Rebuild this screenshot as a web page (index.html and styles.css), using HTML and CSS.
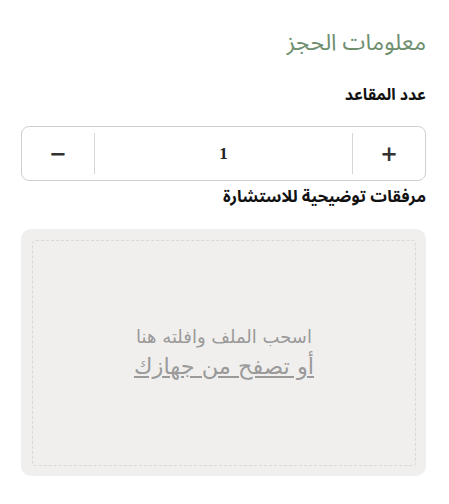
FILE: index.html
```html
<!DOCTYPE html>
<html lang="ar" dir="rtl">
<head>
    <meta charset="UTF-8">
    <meta name="viewport" content="width=device-width, initial-scale=1.0">
    <title>معلومات الحجز</title>
    <link rel="stylesheet" href="styles.css">
</head>
<body>
    <div class="booking">
        <h2 class="booking-title">معلومات الحجز</h2>

        <label class="field-label">عدد المقاعد</label>
        <div class="stepper">
            <button class="step-btn">+</button>
            <div class="step-value">1</div>
            <button class="step-btn">&minus;</button>
        </div>

        <label class="field-label attach-label">مرفقات توضيحية للاستشارة</label>
        <div class="dropzone">
            <div class="dropzone-inner">
                <div class="drop-text">اسحب الملف وافلته هنا</div>
                <a href="#" class="browse-link">أو تصفح من جهازك</a>
            </div>
        </div>
    </div>
</body>
</html>
```

FILE: styles.css
```css
* {
    margin: 0;
    padding: 0;
    box-sizing: border-box;
}

body {
    font-family: "Noto Sans Arabic", "Liberation Sans", Arial, sans-serif;
    background-color: white;
    color: #222;
}

.booking {
    padding: 28px 23px 0 21px;
}

.booking-title {
    font-size: 23px;
    font-weight: normal;
    color: #6f8f6f;
    line-height: 30px;
}

.field-label {
    display: block;
    font-size: 16px;
    font-weight: bold;
    color: #111;
    margin-top: 27px;
    line-height: 20px;
}

.stepper {
    display: flex;
    align-items: stretch;
    height: 55px;
    margin-top: 21px;
    border: 1px solid #cfcfcf;
    border-radius: 8px;
    padding: 6px 0;
}

.step-btn {
    width: 72px;
    border: none;
    background: transparent;
    font-family: "DejaVu Sans", sans-serif;
    font-size: 21px;
    font-weight: bold;
    color: #333;
    cursor: pointer;
}

.step-value {
    flex: 1;
    border-left: 1px solid #d6d6d6;
    border-right: 1px solid #d6d6d6;
    display: flex;
    align-items: center;
    justify-content: center;
    font-family: "Liberation Serif", serif;
    font-weight: bold;
    font-size: 17px;
}

.attach-label {
    margin-top: 6px;
    font-size: 16.5px;
}

.dropzone {
    margin-top: 22px;
    height: 247px;
    background-color: #f0efed;
    border-radius: 10px;
    padding: 11px 10px 10px 11px;
}

.dropzone-inner {
    height: 100%;
    border: 1px dashed #d8d8d8;
    border-radius: 4px;
    display: flex;
    flex-direction: column;
    align-items: center;
    justify-content: center;
    font-family: "DejaVu Sans", sans-serif;
    color: #9a9a9a;
}

.drop-text {
    font-size: 18px;
    line-height: 26px;
}

.browse-link {
    font-size: 22.5px;
    line-height: 32px;
    color: #9a9a9a;
    text-decoration: underline;
}
```
